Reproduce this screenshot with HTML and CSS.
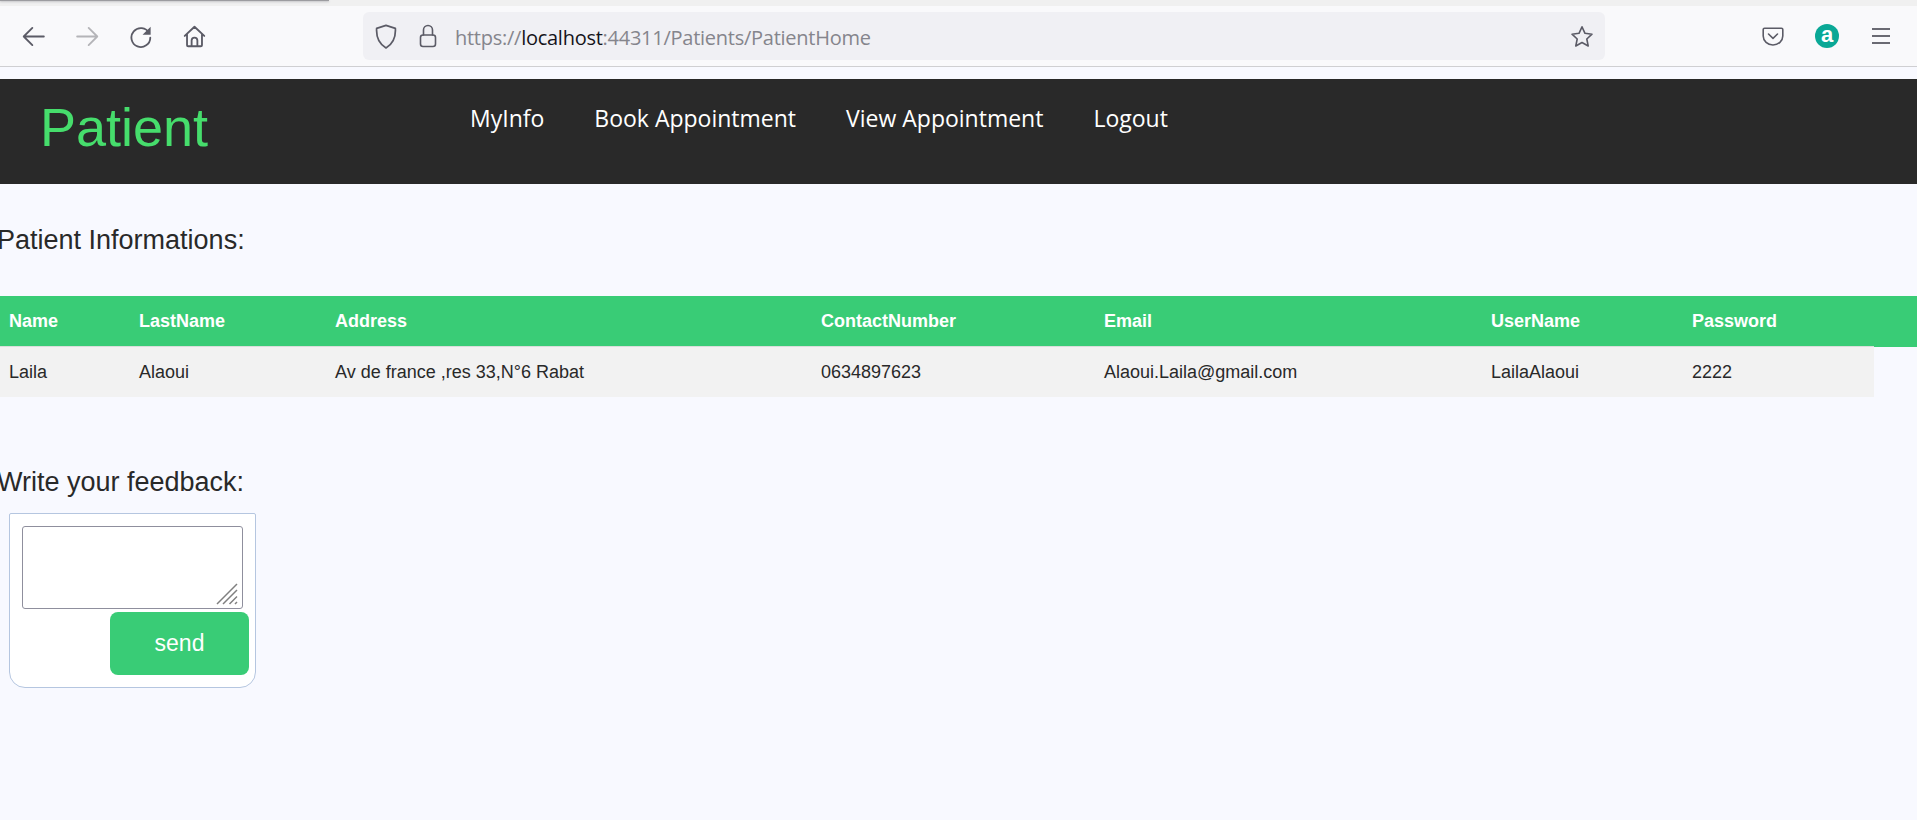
FILE: index.html
```html
<!DOCTYPE html>
<html lang="en">
<head>
  <meta charset="UTF-8" />
  <title>Patient Home</title>
  <link rel="stylesheet" href="styles.css">
</head>
<body>
  <div class="tabstrip"><div class="tab-edge"></div></div>

  <div class="toolbar">
    <div class="tool-group">
      <svg class="tool" viewBox="0 0 20 20"><path d="M19 10H1.500M9 2.500 1.500 10 9 17.500"/></svg>
      <svg class="tool tool-off" viewBox="0 0 20 20"><path d="M1 10h17.500M11 2.500 18.500 10 11 17.500"/></svg>
      <svg class="tool" viewBox="0 0 20 20"><path d="M17.500 7A8.200 8.200 0 1 0 18.500 11"/><path class="solid" d="M18.800 1.500v7h-7z"/></svg>
      <svg class="tool" viewBox="0 0 20 20"><path d="M1.500 9.500 10 1.500l8.500 8M3.500 8v9.500a1 1 0 0 0 1 1h11a1 1 0 0 0 1-1V8M7.500 18.500v-5a2.500 2.500 0 0 1 5 0v5"/></svg>
    </div>
    <div class="urlbar">
      <svg class="shield" viewBox="0 0 20 23"><path d="M10 1.200 18.600 4c.5 7.500-1.500 14-8.600 18C3 18 .9 11.500 1.400 4z"/></svg>
      <svg class="lock" viewBox="0 0 18 24"><path d="M4.500 11V6a4.500 4.500 0 0 1 9 0v5"/><rect x="1.500" y="11" width="15" height="11.500" rx="2.500"/></svg>
      <span class="url"><span class="url-scheme">https://</span><span class="url-host">localhost</span>:44311/Patients/PatientHome</span>
      <svg class="star" viewBox="0 0 24 23"><path d="M12 1.800 15 8.300l7 .9-5.200 4.800 1.400 7-6.200-3.500L5.800 21l1.400-7L2 9.200l7-.9z"/></svg>
    </div>
    <div class="tool-right">
      <svg class="pocket" viewBox="0 0 22 19"><path d="M1.200 2.500a1.300 1.300 0 0 1 1.300-1.300h17a1.300 1.300 0 0 1 1.300 1.300V9a9.800 9 0 0 1-19.600 0z"/><path d="m6.500 7 4.500 4.300L15.500 7"/></svg>
      <span class="addon">a</span>
      <div class="menu-icon"><span></span><span></span><span></span></div>
    </div>
  </div>

  <nav class="navbar">
    <a class="brand">Patient</a>
    <ul class="nav-links">
      <li>MyInfo</li>
      <li>Book Appointment</li>
      <li>View Appointment</li>
      <li>Logout</li>
    </ul>
  </nav>

  <h2 class="section-title info-title">Patient Informations:</h2>

  <table class="info-table">
    <colgroup>
      <col class="c-name"><col class="c-last"><col class="c-addr"><col class="c-phone"><col class="c-email"><col class="c-user"><col>
    </colgroup>
    <thead>
      <tr>
        <th>Name</th>
        <th>LastName</th>
        <th>Address</th>
        <th>ContactNumber</th>
        <th>Email</th>
        <th>UserName</th>
        <th>Password</th>
      </tr>
    </thead>
    <tbody>
      <tr>
        <td>Laila</td>
        <td>Alaoui</td>
        <td>Av de france ,res 33,N°6 Rabat</td>
        <td>0634897623</td>
        <td>Alaoui.Laila@gmail.com</td>
        <td>LailaAlaoui</td>
        <td>2222</td>
      </tr>
    </tbody>
  </table>

  <h2 class="section-title feedback-title">Write your feedback:</h2>

  <form class="feedback-card">
    <div class="input-wrap">
      <textarea class="feedback-input"></textarea>
      <svg class="grip" viewBox="0 0 22 22"><path d="M1 21 21 1M7 21 21 7M13.500 21 21 13.500M19 21l2-2"/></svg>
    </div>
    <button class="send-btn" type="button">send</button>
  </form>
</body>
</html>
```

FILE: styles.css
```css
:root {
  --bg: #f8f9ff;
  --green: #39cc76;
  --dark: #292929;
  --icon: #5b5b66;
}
html, body {
  height: 820px;
  overflow: hidden;
}
body {
  margin: 0;
  background: var(--bg);
  color: #292929;
  font-family: "Liberation Sans", Arial, sans-serif;
}

/* browser chrome */
.tabstrip {
  height: 6px;
  background: #f0f0f0;
}
.tab-edge {
  width: 329px;
  height: 1px;
  background: #9c9ca0;
  box-shadow: 0 1px 2px #b4b4b8;
}
.toolbar {
  height: 60px;
  display: flex;
  align-items: center;
  background: #f9f9fb;
  border-bottom: 1px solid #cfcfd2;
}
.tool-group {
  display: flex;
  gap: 30.5px;
  width: 363px;
  padding-left: 22px;
  box-sizing: border-box;
}
.tool {
  width: 23px;
  height: 23px;
}
svg {
  fill: none;
  stroke: var(--icon);
  stroke-width: 1.600;
  stroke-linecap: round;
  stroke-linejoin: round;
  flex: none;
}
svg .solid {
  fill: var(--icon);
  stroke: none;
}
.tool-off {
  stroke: #b4b4b8;
}
.urlbar {
  width: 1242px;
  height: 48px;
  display: flex;
  align-items: center;
  background: #f0f0f4;
  border-radius: 6px;
  padding-left: 12px;
  box-sizing: border-box;
}
.shield {
  width: 22px;
  height: 25px;
}
.lock {
  width: 18px;
  height: 24px;
  margin-left: 22px;
}
.url {
  margin-left: 18px;
  padding-top: 2px;
  font-family: "Open Sans", sans-serif;
  font-size: 20px;
  letter-spacing: -0.26px;
  color: #85858c;
}
.url-host {
  color: #15141a;
}
.star {
  width: 24px;
  height: 23px;
  margin-left: auto;
  margin-right: 11px;
}
.tool-right {
  flex: 1;
  display: flex;
  align-items: center;
  padding-left: 157px;
}
.pocket {
  width: 22px;
  height: 19px;
}
.addon {
  width: 24px;
  height: 24px;
  margin-left: 31px;
  border-radius: 50%;
  background: #0aa896;
  color: #fff;
  font-size: 22px;
  font-weight: bold;
  line-height: 22px;
  text-align: center;
}
.menu-icon {
  width: 18px;
  margin-left: 33px;
  display: flex;
  flex-direction: column;
  gap: 5px;
}
.menu-icon span {
  height: 2px;
  background: #6a6a73;
}

/* page */
.navbar {
  height: 105px;
  margin-top: 12px;
  display: flex;
  background: var(--dark);
}
.brand {
  width: 470px;
  padding: 13px 0 0 40px;
  box-sizing: border-box;
  font-size: 54px;
  line-height: 70px;
  color: #46dd6c;
}
.nav-links {
  list-style: none;
  margin: 0;
  padding: 19px 0 0;
  display: flex;
  gap: 50px;
  font-family: "Open Sans", sans-serif;
  font-size: 23px;
  line-height: 40px;
  color: #fff;
}
.section-title {
  margin: 0;
  font-size: 27px;
  font-weight: normal;
  line-height: 32px;
  white-space: nowrap;
}
.info-title {
  margin-top: 40px;
  margin-bottom: 40px;
  margin-left: -3px;
}
.info-table {
  width: 1874px;
  table-layout: fixed;
  border-collapse: separate;
  border-spacing: 0;
  font-size: 18px;
}
.c-name { width: 130px; }
.c-last { width: 196px; }
.c-addr { width: 486px; }
.c-phone { width: 283px; }
.c-email { width: 387px; }
.c-user { width: 201px; }
.info-table th, .info-table td {
  height: 50px;
  padding: 1px 9px 0;
  box-sizing: border-box;
  text-align: left;
  white-space: nowrap;
}
.info-table th {
  background: var(--green);
  color: #fff;
  height: 51px;
  border-bottom: 1px solid #d9dedb;
}
/* the header bar runs on to the window edge, past the table */
.info-table th:last-child {
  box-shadow: 43px 0 0 var(--green);
}
.info-table td {
  background: #f2f2f2;
}
.feedback-title {
  margin-top: 69px;
  margin-left: -3px;
}
.feedback-card {
  width: 247px;
  height: 175px;
  margin: 15px 0 0 9px;
  padding-top: 12px;
  box-sizing: border-box;
  background: #fff;
  border: 1px solid #b5c6e0;
  border-radius: 2px 2px 16px 16px;
  display: flex;
  flex-direction: column;
  align-items: flex-end;
}
.input-wrap {
  position: relative;
  height: 83px;
  margin-right: 12px;
}
.feedback-input {
  display: block;
  width: 221px;
  height: 83px;
  margin: 0;
  padding: 2px;
  box-sizing: border-box;
  resize: none;
  border: 1px solid #8f8f9d;
  border-radius: 3px;
  background: #fff;
}
.grip {
  position: absolute;
  right: 5px;
  bottom: 4px;
  width: 22px;
  height: 22px;
  stroke: #808080;
  stroke-width: 1.500;
  stroke-linecap: butt;
}
.send-btn {
  width: 139px;
  height: 63px;
  margin-top: 3px;
  margin-right: 6px;
  border: none;
  border-radius: 8px;
  background: var(--green);
  color: #fff;
  font-family: "Liberation Sans", Arial, sans-serif;
  font-size: 23px;
}
```
